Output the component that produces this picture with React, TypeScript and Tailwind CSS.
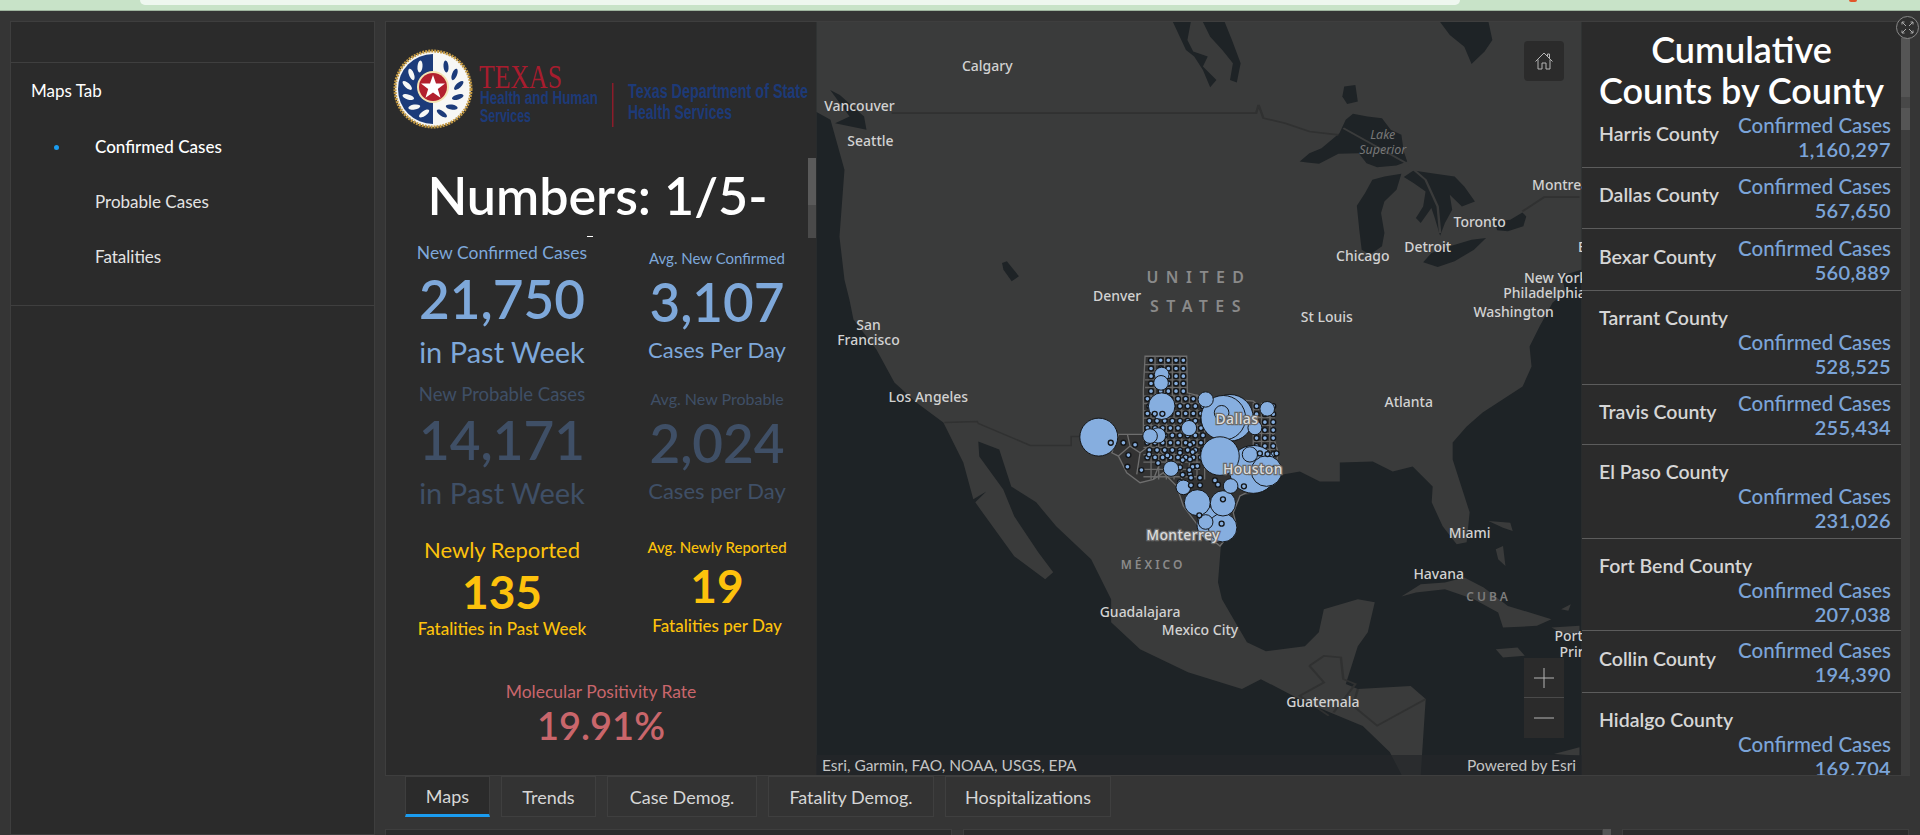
const MENU = ["Confirmed Cases", "Probable Cases", "Fatalities"];

const TABS = [
  { label: "Maps", width: "w-[85px]", active: true },
  { label: "Trends", width: "w-[95px]" },
  { label: "Case Demog.", width: "w-[150px]" },
  { label: "Fatality Demog.", width: "w-[166px]" },
  { label: "Hospitalizations", width: "w-[166px]" },
];

const COUNTIES = [
  { name: "Harris County", value: "1,160,297", height: "h-[61px]" },
  { name: "Dallas County", value: "567,650", height: "h-[61px]" },
  { name: "Bexar County", value: "560,889", height: "h-[62px]" },
  { name: "Tarrant County", value: "528,525", height: "h-[94px]", stack: true },
  { name: "Travis County", value: "255,434", height: "h-[60px]" },
  { name: "El Paso County", value: "231,026", height: "h-[94px]", stack: true },
  { name: "Fort Bend County", value: "207,038", height: "h-[92px]", stack: true },
  { name: "Collin County", value: "194,390", height: "h-[62px]" },
  { name: "Hidalgo County", value: "169,704", height: "h-[94px]", stack: true },
];

const MAP_LABELS: [string, number, number][] = [
  ["Calgary", 987, 71], ["Vancouver", 859, 111], ["Seattle", 870, 146], ["Denver", 1117, 301],
  ["San", 868, 330], ["Francisco", 868, 345], ["Chicago", 1363, 261], ["Detroit", 1428, 252],
  ["Toronto", 1480, 227], ["St Louis", 1327, 322], ["Washington", 1514, 317], ["Los Angeles", 928, 403],
  ["Atlanta", 1409, 408], ["Miami", 1470, 539], ["Havana", 1439, 580], ["Guadalajara", 1140, 618],
  ["Mexico City", 1200, 636], ["Guatemala", 1323, 708], ["Montreal", 1563, 190], ["New York", 1556, 283],
  ["Philadelphia", 1545, 298], ["Boston", 1602, 252], ["Port-au-", 1582, 642], ["Prince", 1581, 658],
];

const BUBBLES: [number, number, number][] = [
  [640, 390, 72], [570, 235, 70], [550, 235, 67], [680, 395, 46], [540, 350, 58], [176, 293, 57],
  [525, 555, 54], [548, 565, 43], [365, 200, 40], [472, 490, 39], [549, 492, 38], [645, 265, 21],
  [354, 288, 23], [330, 290, 22], [447, 266, 23], [497, 180, 23], [682, 208, 22], [393, 388, 23],
  [430, 444, 22], [572, 440, 22], [630, 345, 23], [497, 548, 22], [545, 220, 22], [365, 105, 22], [363, 130, 22],
];

const TOP_RINGS: [number, number][] = [
  [212, 310], [549, 480], [545, 553], [478, 528], [612, 441], [480, 415], [453, 415], [453, 438], [480, 438],
  [525, 423], [534, 436], [448, 392], [472, 380], [660, 342], [683, 344], [710, 342], [702, 388], [344, 223], [367, 223],
];

const WEST_RINGS: [number, number][] = [
  [250, 310], [285, 316], [265, 347], [327, 345], [262, 382], [304, 392], [354, 371], [382, 348],
];

const GRID_DOTS: [number, number][] = [];
for (const y of [62, 87, 110, 132, 155]) {
  for (const x of [333, 362, 385, 408, 430]) GRID_DOTS.push([x, y]);
}
for (let row = 0; row < 9; row++) {
  for (let col = 0; col < 8; col++) {
    GRID_DOTS.push([322 + col * 23 + (row % 2) * 6, 178 + row * 22]);
  }
}
for (let row = 0; row < 7; row++) {
  for (let col = 0; col < 3; col++) {
    GRID_DOTS.push([650 + col * 25, 200 + row * 24]);
  }
}
for (let row = 0; row < 5; row++) {
  GRID_DOTS.push([420 + (row % 2) * 8, 340 + row * 22]);
  GRID_DOTS.push([450 + (row % 2) * 8, 316 + row * 22]);
}

let countyLines = "";
for (const x of [345, 374, 397, 420]) countyLines += `M${x} 50V170`;
for (const y of [75, 98, 121, 144]) countyLines += `M315 ${y}H440`;
for (let x = 333; x < 500; x += 23) countyLines += `M${x} 165V420`;
for (let y = 170; y < 420; y += 22) countyLines += `M310 ${y}H480`;
for (let x = 640; x < 710; x += 25) countyLines += `M${x} 190V350`;
for (let y = 210; y < 350; y += 24) countyLines += `M640 ${y}H705`;

// angles around the seal for the laurel leaves, bottom to top
const LEAF_ANGLES = [20, 46, 72, 98, 124, 150];

function Stat({
  label,
  value,
  sub,
  color,
  wrap,
  labelClass,
  valueClass,
  subClass,
}: {
  label: string;
  value: string;
  sub: string;
  color: string;
  wrap: string;
  labelClass: string;
  valueClass: string;
  subClass: string;
}) {
  return (
    <div className={`flex flex-col items-center whitespace-nowrap ${color} ${wrap}`}>
      <div className={labelClass}>{label}</div>
      <div className={valueClass}>{value}</div>
      <div className={subClass}>{sub}</div>
    </div>
  );
}

const WIDE = {
  wrap: "h-[141px]",
  labelClass: "h-6 text-[17.5px] leading-6",
  valueClass: "mt-1 h-[60px] text-[53px] leading-[60px] font-semibold",
  subClass: "mt-1.5 h-[34px] text-[29px] leading-[34px]",
};

const NARROW = {
  wrap: "h-[141px] pt-1.5",
  labelClass: "h-[22px] text-[15px] leading-[22px]",
  valueClass: "mt-[3px] h-[60px] text-[53px] leading-[60px] font-semibold",
  subClass: "mt-[3px] h-[30px] text-[22px] leading-[30px]",
};

function Logo() {
  return (
    <svg viewBox="0 0 430 118" className="h-[118px] w-[430px]">
      <circle cx="47" cy="67" r="38" fill="#f7f7f5" stroke="#c49a44" strokeWidth="3" strokeDasharray="2 1" />
      <path d="M47 32a35 35 0 0 0 0 70z" fill="#1c3b7a" />
      {LEAF_ANGLES.map((a) => (
        <g key={a}>
          <ellipse cx="47" cy="93" rx="2.500" ry="6" fill="#1c3b7a" transform={`rotate(${-a} 47 67) rotate(-35 47 93)`} />
          <ellipse cx="47" cy="93" rx="2.500" ry="6" fill="#f7f7f5" transform={`rotate(${a} 47 67) rotate(35 47 93)`} />
        </g>
      ))}
      <circle cx="47" cy="65" r="16" fill="#f4e3b2" />
      <circle cx="47" cy="65" r="14" fill="#b3202e" />
      <path d="M47 53l3 8.600h9l-7.200 5.400 2.700 8.800L47 70.500l-7.500 5.300 2.700-8.800-7.200-5.400h9z" fill="#fff" />
      <text x="93" y="66" textLength="83" lengthAdjust="spacingAndGlyphs" fontFamily="'Liberation Serif', serif" fontSize="34" fill="#a81c2e">
        TEXAS
      </text>
      <text x="94" y="82" textLength="118" lengthAdjust="spacingAndGlyphs" fontFamily="'Liberation Sans', sans-serif" fontWeight="700" fontSize="18" fill="#1d3a78">
        Health and Human
      </text>
      <text x="94" y="100" textLength="51" lengthAdjust="spacingAndGlyphs" fontFamily="'Liberation Sans', sans-serif" fontWeight="700" fontSize="18" fill="#1d3a78">
        Services
      </text>
      <rect x="226" y="61" width="1.500" height="44" fill="#8c1c2a" />
      <text x="242" y="76" textLength="180" lengthAdjust="spacingAndGlyphs" fontFamily="'Liberation Sans', sans-serif" fontWeight="700" fontSize="20" fill="#1d3a78">
        Texas Department of State
      </text>
      <text x="242" y="97" textLength="104" lengthAdjust="spacingAndGlyphs" fontFamily="'Liberation Sans', sans-serif" fontWeight="700" fontSize="20" fill="#1d3a78">
        Health Services
      </text>
    </svg>
  );
}

function MapCanvas() {
  return (
    <svg viewBox="816 22 766 754" className="block h-full w-full" fontFamily="'Noto Sans', sans-serif">
      <rect x="816" y="22" width="766" height="754" fill="#1e2326" />
      <path
        d="M816 22H1582V270L1562 276 1566 292 1553 303 1540 327 1530 347 1532 367 1523 387 1503 400 1483 413 1467 427 1453 443 1453 460 1470 513 1467 543 1457 545 1443 527 1432 503 1433 487 1413 467 1393 472 1373 462 1340 463 1340 482 1320 482 1300 472 1283 475 1260 493 1237 497 1222 533 1218 583 1222 600 1247 643 1266 652 1305 647 1319 633 1324 610 1358 600 1375 603 1368 633 1358 647 1346 685 1358 690 1411 687 1426 700 1421 776H1402L1390 753 1363 727 1305 703 1261 680 1242 690 1188 673 1140 650 1111 623 1111 600 1091 560 1056 527 1036 503 1011 487 999 450 978 442 979 457 1003 490 1014 517 1038 553 1053 573 1045 580 1014 557 985 517 975 503 986 492 973 500 963 463 943 423 916 403 894 383 876 350 853 320 849 300 844 280 839 237 844 170 830 120 816 112Z"
        fill="#3a3b3b"
      />
      <path d="M944 423L977 422 978 424 1030 446H1071V437H1080" fill="none" stroke="#303131" strokeWidth="1.500" />
      <g transform="translate(820 20) scale(.4847 .3333)" fill="#1e2326">
        <path d="M990 425L1010 400 1035 385 1072 340 1085 300 1100 282 1130 290 1160 295 1178 330 1200 345 1205 395 1212 425 1190 437 1150 442 1128 430 1112 400 1070 402 1030 432 1005 428Z" />
        <path d="M1108 558L1125 520 1140 480 1165 470 1200 462 1190 510 1165 545 1158 580 1165 640 1160 680 1135 705 1118 690 1113 630Z" />
        <path d="M1205 472L1225 452 1270 462 1310 470 1330 500 1352 545 1325 560 1300 525 1305 570 1290 610 1280 648 1268 590 1262 565 1240 610 1230 595 1245 560 1250 515 1225 490Z" />
        <path d="M1245 728L1262 700 1300 680 1345 660 1375 655 1350 690 1310 725 1275 742Z" />
        <path d="M1392 605L1425 600 1450 578 1458 590 1452 620 1420 635 1398 632Z" />
        <path d="M790 6H835L850 60 868 130 860 188 846 180 852 130 830 90 805 50Z" />
        <path d="M728 6H765L758 60 770 95 800 110 790 140 818 180 805 202 790 150 772 110 755 90Z" />
        <path d="M1280 6H1380L1388 60 1372 95 1345 132 1330 80 1300 45Z" />
        <path d="M1082 200L1105 195 1110 245 1088 252 1078 230Z" />
        <path d="M375 730L385 725 410 770 395 785 378 750Z" />
        <path d="M20 210L40 225 90 290 95 330 30 310 60 290Z" />
        <path d="M147 280H900L905 255 915 295 960 310 1010 335 1070 345M1450 575L1495 532H1568" fill="none" stroke="#303131" strokeWidth="5" />
        <path d="M1080 325L1210 430 1250 480 1275 560 1280 640" fill="none" stroke="#3a3b3b" strokeWidth="5" />
      </g>
      <g transform="translate(820 500) scale(.4847 .3333)" fill="#3a3b3b">
        <path d="M1200 292L1240 255 1290 250 1330 235 1370 265 1420 320 1510 360 1480 380 1410 385 1400 340 1350 300 1290 270 1230 280Z" />
        <path d="M1395 450L1440 445 1455 470 1410 475Z" />
        <path d="M1395 150L1410 140 1415 200 1400 180ZM1380 65L1425 70 1430 95 1410 85Z" />
        <path d="M1530 330L1550 315 1545 335ZM1510 385L1568 380V405L1530 400Z" />
        <path d="M1515 765L1568 745V770Z" />
        <path d="M1010 500L1040 470 1075 475 1080 540 1105 555 1060 640M1010 500L1040 550 990 590 1050 650M1110 570L1100 620 1150 680 1250 600" fill="none" stroke="#303131" strokeWidth="5" />
      </g>
      {MAP_LABELS.map(([text, x, y]) => (
        <text key={text} x={x} y={y} textAnchor="middle" fontSize="14" fontWeight="500" fill="#d2d2d2">
          {text}
        </text>
      ))}
      <g fill="#8a8a8a" fontWeight="600" textAnchor="middle">
        <text x="1199" y="283" fontSize="16" letterSpacing="7.500">UNITED</text>
        <text x="1199" y="312" fontSize="16" letterSpacing="7.500">STATES</text>
        <text x="1153" y="570" fontSize="12" letterSpacing="3">MÉXICO</text>
        <text x="1489" y="602" fontSize="12" letterSpacing="3" fill="#7d7d7d">CUBA</text>
      </g>
      <g fill="#777" fontSize="12.500" fontStyle="italic" textAnchor="middle">
        <text x="1383" y="139">Lake</text>
        <text x="1383" y="154">Superior</text>
      </g>
      <g transform="translate(1040 340) scale(.3333)">
        <path
          d="M315 50L440 50 442 160 480 170 640 185 690 230 700 290 715 340 700 420 600 470 580 520 590 560 540 620 490 580 430 500 410 440 370 400 340 420 300 430 260 400 235 350 215 340 235 285 310 285 310 150Z"
          fill="#333"
          stroke="#6e6e6e"
          strokeWidth="4"
        />
        <path d={countyLines} fill="none" stroke="#6a6a6a" strokeWidth="4" />
        <path d="M235 350L270 320 300 340 340 310 370 345 340 420M300 340L290 405M270 320L262 285" fill="none" stroke="#6e6e6e" strokeWidth="4" />
        {GRID_DOTS.map(([x, y], i) => (
          <circle key={i} cx={x} cy={y} r="7.500" fill="#86aedf" stroke="#141618" strokeWidth="4" />
        ))}
        {WEST_RINGS.map(([x, y]) => (
          <circle key={`${x}-${y}`} cx={x} cy={y} r="7.500" fill="#86aedf" stroke="#141618" strokeWidth="4" />
        ))}
        {BUBBLES.map(([x, y, r]) => (
          <circle key={`${x}-${y}`} cx={x} cy={y} r={r} fill="#86aedf" stroke="#141618" strokeWidth="3" />
        ))}
        {TOP_RINGS.map(([x, y]) => (
          <circle key={`${x}-${y}`} cx={x} cy={y} r="7.500" fill="#86aedf" stroke="#141618" strokeWidth="4" />
        ))}
      </g>
      <g fontSize="14" fontWeight="500" textAnchor="middle" fill="#dcdcdc" stroke="#6a6a6a" strokeWidth="2.500" paintOrder="stroke" letterSpacing=".4">
        <text x="1237" y="425">Dallas</text>
        <text x="1253" y="475">Houston</text>
        <text x="1183" y="541">Monterrey</text>
      </g>
    </svg>
  );
}

function CountyRow({ name, value, height, stack }: { name: string; value: string; height: string; stack?: boolean }) {
  return (
    <div className={`shrink-0 border-b border-[#5c5c5c] pl-[17px] pr-2.5 ${height} ${stack ? "pt-[15px]" : "flex items-center justify-between"}`}>
      <div className={`text-[19.5px] leading-6 font-semibold text-[#d6d6d6] ${stack ? "" : "pb-1.5"}`}>{name}</div>
      <div className="text-right text-[20.5px] leading-6 font-medium text-[#7ba4d8]">
        <div>Confirmed Cases</div>
        <div className="text-[20px] font-semibold tracking-[.3px]">{value}</div>
      </div>
    </div>
  );
}

export default function App() {
  return (
    <div className="relative h-[835px] w-[1920px] overflow-hidden bg-[#353535] font-[Lato,sans-serif]">
      <div className="h-[11px] border-b border-[#9fb59f] bg-[#c8e3c8] pl-[140px]">
        <div className="h-[5px] w-[1320px] rounded-b-xl bg-[#eef7ef]" />
      </div>

      <div className="flex gap-2.5 pl-2.5 pt-2.5">
        <aside className="h-[814px] w-[365px] shrink-0 border border-[#3e3e3e] bg-[#2b2b2b]">
          <div className="h-[41px] border-b border-[#3f3f3f]" />
          <nav className="h-[243px] border-b border-[#3f3f3f] text-[17px]">
            <div className="pl-5 pt-4 leading-6 text-white">Maps Tab</div>
            <ul className="mt-8 flex flex-col gap-[31px]">
              {MENU.map((item, i) => (
                <li key={item} className="flex h-6 items-center leading-6">
                  <span className={`ml-[43px] h-[5px] w-[5px] rounded-full ${i === 0 ? "bg-[#1a9cf0]" : ""}`} />
                  <span className={`ml-9 ${i === 0 ? "font-medium text-white" : "text-[#e4e4e4]"}`}>{item}</span>
                </li>
              ))}
            </ul>
          </nav>
        </aside>

        <main className="w-[1525px] shrink-0">
          <div className="flex h-[755px] border-y border-[#3e3e3e]">
            <section className="relative w-[431px] shrink-0 overflow-hidden border-l border-[#3e3e3e] bg-[#2b2b2b]">
              <Logo />
              <h1 className="h-[97px] overflow-hidden pr-[7px] text-center text-[52px] leading-[110px] font-semibold whitespace-nowrap text-white">
                Numbers: 1/5-
              </h1>
              <span className="absolute left-[201px] top-[214px] h-px w-1.5 bg-white" />
              <span className="absolute right-0 top-[136px] h-[47px] w-2 bg-[#5a5a5a]" />
              <span className="absolute right-0 top-[183px] h-[33px] w-2 bg-[#4a4a4a]" />

              <div className="ml-4 mt-1 grid w-[415px] grid-cols-[200px_200px] gap-x-[15px]">
                <Stat {...WIDE} label="New Confirmed Cases" value="21,750" sub="in Past Week" color="text-[#7ea8da]" />
                <Stat {...NARROW} label="Avg. New Confirmed" value="3,107" sub="Cases Per Day" color="text-[#7ea8da]" />
                <Stat {...WIDE} labelClass="h-6 text-[18.5px] leading-6" label="New Probable Cases" value="14,171" sub="in Past Week" color="text-[#3f4f66]" />
                <Stat {...NARROW} labelClass="h-[22px] text-[16px] leading-[22px]" label="Avg. New Probable" value="2,024" sub="Cases per Day" color="text-[#3f4f66]" />
                <Stat
                  label="Newly Reported"
                  value="135"
                  sub="Fatalities in Past Week"
                  color="text-[#fdc20c]"
                  wrap="h-[157px] pt-3"
                  labelClass="h-[30px] text-[22px] leading-[30px]"
                  valueClass="mt-0.5 h-[50px] text-[46px] leading-[50px] font-bold"
                  subClass="h-6 text-[17px] leading-6 font-medium"
                />
                <Stat
                  label="Avg. Newly Reported"
                  value="19"
                  sub="Fatalities per Day"
                  color="text-[#fdc20c]"
                  wrap="h-[157px] pt-[13px]"
                  labelClass="h-[22px] text-[15px] leading-[22px] font-medium"
                  valueClass="mt-[3px] h-[50px] text-[46px] leading-[50px] font-bold"
                  subClass="mt-[3px] h-6 text-[17px] leading-6 font-medium"
                />
              </div>
              <div className="flex flex-col items-center text-[#c9666b]">
                <div className="h-6 text-[17.5px] leading-6">Molecular Positivity Rate</div>
                <div className="mt-px h-10 text-[38px] leading-10 font-semibold">19.91%</div>
              </div>
            </section>

            <section className="relative min-w-0 flex-1 overflow-hidden">
              <MapCanvas />
              <button className="absolute right-[18px] top-[19px] flex h-10 w-10 items-center justify-center rounded-sm bg-[#2b2b2b]">
                <svg width="20" height="20" viewBox="0 0 20 20" fill="none" stroke="#b5b5b5" strokeWidth="1">
                  <path d="M1.500 10.500L10 2l8.500 8.500M4 8.500V18h4v-6h4v6h4V8.500M13.500 5V3h2v4" />
                </svg>
              </button>
              <div className="absolute right-[18px] top-[636px] flex w-10 flex-col bg-[#2b2b2b]">
                <button className="flex h-10 items-center justify-center border-b border-[#4a4a4a]">
                  <svg width="20" height="20" viewBox="0 0 20 20" stroke="#b5b5b5" strokeWidth="1">
                    <path d="M0 10h20M10 0v20" />
                  </svg>
                </button>
                <button className="flex h-10 items-center justify-center">
                  <svg width="20" height="20" viewBox="0 0 20 20" stroke="#b5b5b5" strokeWidth="1">
                    <path d="M0 10h20" />
                  </svg>
                </button>
              </div>
              <div className="absolute inset-x-0 bottom-0 flex h-5 items-center justify-between bg-[#24272a]/70 pl-[6px] pr-1.5 text-[15.5px] leading-5 text-[#c4c4c4]">
                <span>Esri, Garmin, FAO, NOAA, USGS, EPA</span>
                <span>Powered by Esri</span>
              </div>
            </section>

            <section className="flex w-[319px] shrink-0 flex-col overflow-hidden bg-[#2b2b2b]">
              <h2 className="h-[85px] shrink-0 overflow-hidden pt-[7px] text-center text-[36px] leading-[41px] font-semibold text-white">
                Cumulative
                <br />
                Counts by County
              </h2>
              {COUNTIES.map((c) => (
                <CountyRow key={c.name} {...c} />
              ))}
            </section>

            <div className="w-[9px] shrink-0 bg-[#3d3d3d] pt-4">
              <div className="h-[59px] bg-[#555]" />
              <div className="h-[11px] bg-[#484848]" />
              <div className="h-[22px] bg-[#555]" />
            </div>
          </div>

          <div className="flex gap-[11px] pl-5">
            {TABS.map((t) => (
              <div
                key={t.label}
                className={`flex h-[41px] items-center justify-center border text-[18px] leading-6 text-[#d6d6d6] ${t.width} ${
                  t.active ? "border-[#3e3e3e] border-b-[3px] border-b-[#1a9cf0] bg-[#2b2b2b]" : "border-[#3f3f3f] bg-[#333]"
                }`}
              >
                {t.label}
              </div>
            ))}
          </div>

          <div className="mt-3 flex h-10">
            <div className="w-[567px] border border-[#3e3e3e] bg-[#2b2b2b]" />
            <div className="ml-[11px] w-[640px] border border-[#3e3e3e] bg-[#2b2b2b]" />
            <div className="w-2 bg-[#555]" />
            <div className="ml-[11px] w-[287px] border border-[#3e3e3e] bg-[#2b2b2b]" />
          </div>
        </main>
      </div>

      <span className="absolute left-[1849px] top-0 h-0.5 w-2 rounded-b-full bg-[#e2562a]" />
      <div className="absolute left-[1896px] top-4 flex h-[23px] w-[23px] items-center justify-center rounded-full border border-[#888] bg-[#2f2f2f]">
        <svg width="13" height="13" viewBox="0 0 13 13" fill="none" stroke="#aaa" strokeWidth="1">
          <path d="M5 5L1 1M1 3.500V1h2.500M8 5l4-4M9.500 1H12v2.500M5 8l-4 4M1 9.500V12h2.500M8 8l4 4M12 9.500V12H9.500" />
        </svg>
      </div>
    </div>
  );
}
